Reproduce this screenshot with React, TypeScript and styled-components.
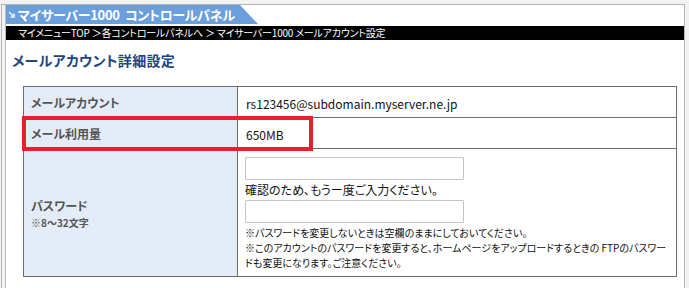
import React from "react";
import styled, { createGlobalStyle } from "styled-components";

const GlobalStyle = createGlobalStyle`
  html, body {
    margin: 0;
    padding: 0;
    background: #f2f2f2;
    height: 100%;
  }
  body {
    font-family: "Noto Sans CJK JP", "Liberation Sans", sans-serif;
  }
`;

export default function App() {
  return (
    <>
      <GlobalStyle />
      <Frame>
        <Panel>
          <TabRow>
            <Tab>
              <TabIcon viewBox="0 0 8 8">
                <path d="M1 1 L6 6 M6 2.5 L6 6 L2.5 6" stroke="#dff3ff" strokeWidth="1.6" fill="none" />
              </TabIcon>
              マイサーバー1000&nbsp;&nbsp;コントロールパネル
            </Tab>
          </TabRow>
          <Breadcrumb>マイメニューTOP ＞各コントロールパネルへ ＞ マイサーバー1000 メールアカウント設定</Breadcrumb>
          <PageTitle>メールアカウント詳細設定</PageTitle>
          <TableWrap>
            <DetailTable>
              <tbody>
                <tr>
                  <HeadCell $height={31}>メールアカウント</HeadCell>
                  <ValueCell>
                    <ValueText>rs123456@subdomain.myserver.ne.jp</ValueText>
                  </ValueCell>
                </tr>
                <tr>
                  <HeadCell $height={31}>メール利用量</HeadCell>
                  <ValueCell>
                    <ValueText>650MB</ValueText>
                  </ValueCell>
                </tr>
                <tr>
                  <HeadCell $height={128}>
                    パスワード
                    <SubLabel>※8～32文字</SubLabel>
                  </HeadCell>
                  <PasswordCell>
                    <TextInput type="password" />
                    <Hint>確認のため、もうー度ご入力ください。</Hint>
                    <TextInput type="password" />
                    <Notes>
                      ※パスワードを変更しないときは空欄のままにしておいてください。
                      <br />
                      ※このアカウントのパスワードを変更すると、ホームページをアップロードするときの FTPのパスワー
                      <br />
                      ドも変更になります。ご注意ください。
                    </Notes>
                  </PasswordCell>
                </tr>
              </tbody>
            </DetailTable>
            <Highlight />
          </TableWrap>
        </Panel>
      </Frame>
    </>
  );
}

const Frame = styled.div`
  margin: 4px 4px 0 1px;
  height: calc(100vh - 4px);
  box-sizing: border-box;
  border-top: 1px solid #b4b4b4;
  border-left: 1px solid #b4b4b4;
  padding-left: 3px;
`;

const Panel = styled.div`
  background: #fff;
  height: 100%;
  box-sizing: border-box;
  border-left: 1px solid #bcbcbc;
  border-right: 1px solid #b4b4b4;
`;

const TabRow = styled.div`
  height: 19px;
  display: flex;
`;

const Tab = styled.div`
  width: 252px;
  height: 19px;
  background: #6a9fdc;
  clip-path: polygon(0 0, 234px 0, 252px 100%, 0 100%);
  color: #fff;
  font-size: 13px;
  font-weight: bold;
  line-height: 19px;
  white-space: nowrap;
  padding-left: 2px;
  box-sizing: border-box;
  display: flex;
  align-items: center;
  letter-spacing: -0.3px;
  font-feature-settings: "palt";
`;

const TabIcon = styled.svg`
  width: 8px;
  height: 8px;
  margin-right: 2px;
  flex-shrink: 0;
`;

const Breadcrumb = styled.div`
  margin-top: 2px;
  height: 14px;
  background: #000;
  color: #fff;
  font-size: 10px;
  line-height: 14px;
  padding-left: 12px;
  white-space: nowrap;
  overflow: hidden;
  letter-spacing: -0.2px;
  font-feature-settings: "palt";
`;

const PageTitle = styled.h1`
  margin: 0;
  padding: 10px 0 0 6px;
  height: 36px;
  box-sizing: border-box;
  font-size: 14px;
  font-weight: bold;
  line-height: 20px;
  color: #23447c;
  letter-spacing: 0.3px;
  font-feature-settings: "palt";
`;

const TableWrap = styled.div`
  position: relative;
  margin: 10px 0 0 17px;
  width: 654px;
`;

const DetailTable = styled.table`
  width: 100%;
  border-collapse: collapse;
  border: 1px solid #6e6e6e;
  font-size: 12px;
`;

const HeadCell = styled.th<{ $height: number }>`
  width: 214px;
  height: ${(p) => p.$height}px;
  box-sizing: border-box;
  background: #e4ecf8;
  border: 1px solid #6e6e6e;
  color: #555;
  font-size: 12px;
  font-weight: bold;
  text-align: left;
  vertical-align: middle;
  padding: 0 0 0 7px;
  font-feature-settings: "palt";
`;

const SubLabel = styled.div`
  font-size: 10px;
  margin-top: 3px;
  line-height: 12px;
`;

const ValueCell = styled.td`
  border: 1px solid #6e6e6e;
  vertical-align: middle;
  padding: 3px 8px 0 8px;
  color: #111;
`;

const ValueText = styled.span`
  font-size: 12px;
`;

const PasswordCell = styled.td`
  border: 1px solid #6e6e6e;
  vertical-align: top;
  padding: 8px 8px 0 7px;
  color: #111;
`;

const TextInput = styled.input`
  display: block;
  width: 219px;
  height: 23px;
  box-sizing: border-box;
  margin: 0;
  border: 1px solid #c4c4c4;
  background: #fff;
  border-radius: 1px;
`;

const Hint = styled.div`
  font-size: 12px;
  line-height: 18px;
  margin: 1px 0 1px;
  font-feature-settings: "palt";
`;

const Notes = styled.div`
  font-size: 10px;
  line-height: 15px;
  margin-top: 2px;
  white-space: nowrap;
  font-feature-settings: "palt";
`;

const Highlight = styled.div`
  position: absolute;
  left: -1px;
  top: 30px;
  width: 291px;
  height: 35px;
  box-sizing: border-box;
  border: 4px solid #e4222c;
  pointer-events: none;
`;
